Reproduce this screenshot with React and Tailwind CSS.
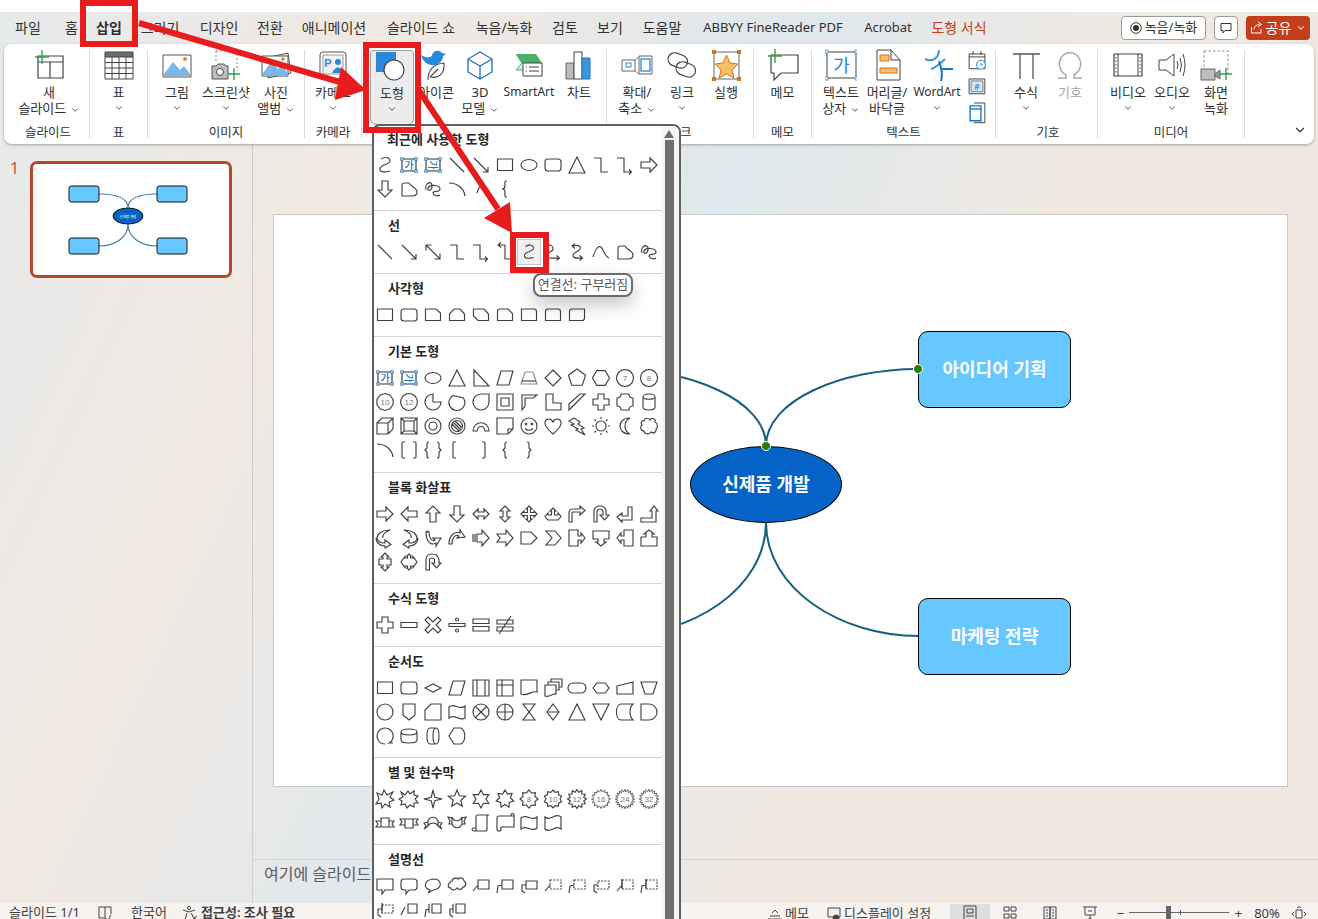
import { ChevronDown } from 'lucide-react'

const circle = (x, y, r, ry = r) => `M${x - r} ${y}a${r} ${ry} 0 1 0 ${2 * r} 0a${r} ${ry} 0 1 0 ${-2 * r} 0Z`
const ngon = (n, r, rot = -90, cx = 12, cy = 12) => {
	const pts = []
	for (let i = 0; i < n; i++) {
		const a = ((rot + (i * 360) / n) * Math.PI) / 180
		pts.push(`${(cx + r * Math.cos(a)).toFixed(2)} ${(cy + r * Math.sin(a)).toFixed(2)}`)
	}
	return `M${pts.join('L')}Z`
}
const star = (n, R, r, rot = -90) => {
	const pts = []
	for (let i = 0; i < n * 2; i++) {
		const a = ((rot + (i * 180) / n) * Math.PI) / 180
		const d = i % 2 ? r : R
		pts.push(`${(12 + d * Math.cos(a)).toFixed(2)} ${(12 + d * Math.sin(a)).toFixed(2)}`)
	}
	return `M${pts.join('L')}Z`
}

const SH = {
	line: 'M5 5L19 19',
	arrow: 'M5 5L19 19M19 14V19H14',
	dbl: 'M5 5L19 19M19 13.5V19H13.5M5 10.5V5H10.5',
	elbow: 'M5 5H12V19H19',
	elbowA: 'M4 5H11V19H18M16 16.5L18.5 19L16 21.5',
	elbowD: 'M6 5H12V19H19M8 2.5L5 5L8 7.5',
	curve: 'M8 6C13 3 17 5 17 8C17 12 7 11 7 16C7 20 13 19 17 18',
	curveA: 'M6 6C10 4 12 6 12 9C12 13 5 11 6 16C6 19 12 18 18 18M15.5 15.5L18.5 18L15.5 20.5',
	curveD: 'M8 6C14 4 16 7 15 9C13 13 7 12 8 16C9 19 12 18 17 18M10 3.5L7 6L10 8.5M14.5 15.5L17.5 18L14.5 20.5',
	curl: 'M4 17C6 9 10 5 12 7C14 9 16 17 20 18',
	free: 'M5 19V8Q5 6 8 6H12C14 10 20 11 20 15Q20 19 15 19Z',
	scrib: 'M5 13C3 5 12 3 11 10C10 15 6 14 7 11C9 7 19 8 19 12C19 16 12 13 12 16C12 18 16 20 19 18',
	arc: 'M4 6C12 6 19 11 20 19',
	arcS: 'M8 16C9 12 11 9 13 8',
	brace: 'M14 4C11 4 12 6 12 9C12 11 11 12 9 12C11 12 12 13 12 15C12 18 11 20 14 20',
	rect: 'M4.5 6H19.5V17.5H4.5Z',
	oval: circle(12, 12, 8, 5.5),
	rr: 'M7 6H17Q20 6 20 9V15Q20 18 17 18H7Q4 18 4 15V9Q4 6 7 6Z',
	tri: 'M12 4L20 20H4Z',
	rArrow: 'M4 9H13V5L20 12L13 19V15H4Z',
	dArrow: 'M9 4V13H5L12 20L19 13H15V4Z',
	uArrow: 'M9 20V11H5L12 4L19 11H15V20Z',
	lArrow: 'M20 9H11V5L4 12L11 19V15H20Z',
	lr: 'M4 12L9 7V10H15V7L20 12L15 17V14H9V17Z',
	ud: 'M12 4L17 9H14V15H17L12 20L7 15H10V9H7Z',
	quad: 'M12 4L15 7H13.5V10.5H17V9L20 12L17 15V13.5H13.5V17H15L12 20L9 17H10.5V13.5H7V15L4 12L7 9V10.5H10.5V7H9Z',
	lru: 'M12 6L15 9H13.5V13H17V11L20 14.5L17 18H7L4 14.5L7 11V13H10.5V9H9Z',
	bent: 'M4 20V11Q4 7 8 7H15V4L20 8.5L15 13V10H8Q7 10 7 11V20Z',
	uturn: 'M5 20V10Q5 4 11 4T17 10V13H20L15.5 18L11 13H14V10Q14 7 11 7T8 10V20Z',
	leftUp: 'M4 15L9 11V14H15V5H19V18H9V20Z',
	bentUp: 'M4 16H15V9H13L17 4L21 9H19V20H4Z',
	cR: 'M17 4C9 4 4 8 4 12C4 15 7 17 12 17V14L18 18.5L12 22V20C6 20 3 16 3 12M17 4C12 6 9 9 10 12',
	cL: 'M7 4C15 4 20 8 20 12C20 15 17 17 12 17V14L6 18.5L12 22V20C18 20 21 16 21 12M7 4C12 6 15 9 14 12',
	cU: 'M5 6C5 16 10 20 15 17V20L20 12L12 12L14 14C11 16 8 12 8 6ZM8 6C8 5 5 5 5 6',
	cD: 'M4 18C4 10 9 5 15 7V4L20 11L12 12L14 10C10 8 7 12 7 18Z',
	striped: 'M4 8V16M6 8V16M8 8H13V4L20 12L13 20V16H8Z',
	notched: 'M4 8H13V4L20 12L13 20V16H4L7 12Z',
	home: 'M4 6H14L20 12L14 18H4Z',
	chev: 'M5 5H14L20 12L14 19H5L11 12Z',
	rCall: 'M4 4H13V10H16V7L20 12L16 17V14H13V20H4Z',
	dCall: 'M4 5H20V13H15V16H17L12 20L7 16H9V13H4Z',
	lCall: 'M20 4H11V10H8V7L4 12L8 17V14H11V20H20Z',
	uCall: 'M4 20H20V11H15V8H17L12 4L7 8H9V11H4Z',
	udCall: 'M12 3L16 7H14V9H18V15H14V17H16L12 21L8 17H10V15H6V9H10V7H8Z',
	quadCall: 'M12 4L14 6H13.5V8H16V6.5L20 12L16 17.5V16H13.5V18H14L12 20L10 18H10.5V16H8V17.5L4 12L8 6.5V8H10.5V6H10Z',
	circ: 'M5 20V10Q5 4 11 4T18 10V13H20L15.5 18L11 13H13.5V10Q13.5 8 11 8T8.5 10V20Z',
	rtri: 'M5 4L20 20H5Z',
	para: 'M8 5H20L16 19H4Z',
	trap: { d: 'M8 6H16L20 18H4Z', dash: 'M5 15H19', gray: true },
	dia: 'M12 4L20 12L12 20L4 12Z',
	pent: ngon(5, 9),
	hex: ngon(6, 8.5, 0),
	hept: { d: ngon(14, 8.5), t: '7' },
	oct: { d: ngon(16, 8.5), t: '8' },
	dec: { d: ngon(10, 8.5), t: '10' },
	dodec: { d: ngon(12, 8.5, -75), t: '12' },
	pie: 'M12 12V4A8 8 0 1 0 20 12Z',
	chord: 'M8 5.5L18.5 8A8 8 0 1 1 8 5.5Z',
	tear: 'M20 4V12A8 8 0 1 1 12 4Z',
	frame: 'M4 4H20V20H4ZM8 8V16H16V8Z',
	half: 'M5 5H20L16 8H8V16L5 20Z',
	lshape: 'M5 4H12V13H20V20H5Z',
	diag: 'M4 14L15 4H20L4 20Z',
	plus: 'M9 4H15V9H20V15H15V20H9V15H4V9H9Z',
	plaque: 'M8 4H16Q16 8 20 8V16Q16 16 16 20H8Q8 16 4 16V8Q8 8 8 4Z',
	can: 'M6 7C6 3 18 3 18 7V17C18 21 6 21 6 17ZM6 7C6 10 18 10 18 7',
	cube: 'M4 9L9 4H20V15L15 20H4ZM4 9H15V20M15 9L20 4',
	bevel: 'M4 4H20V20H4ZM7 7H17V17H7ZM4 4L7 7M20 4L17 7M20 20L17 17M4 20L7 17',
	donut: circle(12, 12, 8) + circle(12, 12, 4),
	no: circle(12, 12, 8) + circle(12, 12, 5.5) + 'M8 8L16 16M9.5 6.5L17.5 14.5M6.5 9.5L14.5 17.5',
	blockArc: 'M4 17C4 6 20 6 20 17H16C15 11 9 11 8 17Z',
	fold: 'M4 4H20V15L15 20H4ZM20 15H15V20',
	smile: circle(12, 12, 8) + circle(9, 10, 0.8) + circle(15, 10, 0.8) + 'M8 14.5Q12 18 16 14.5',
	heart: 'M12 20C5 14 3 11 4 8C5 4 10 4 12 8C14 4 19 4 20 8C21 11 19 14 12 20Z',
	bolt: 'M9 4L15 8L13 10L19 14L16 15L20 21L11 16L13 15L6 11L9 10L4 7Z',
	sun: circle(12, 12, 5) + 'M12 3V5M12 19V21M3 12H5M19 12H21M5.5 5.5L7 7M17 17L18.5 18.5M18.5 5.5L17 7M7 17L5.5 18.5',
	moon: 'M17 4C10 4 7 8 7 12S10 20 17 20C13 18 12 15 12 12S13 6 17 4Z',
	cloud: 'M7 7C8 3 12 4 13 6C15 3 19 5 18 8C21 9 21 14 19 15C20 18 16 20 14 18C12 21 7 20 7 17C3 17 3 12 5 11C3 9 5 6 7 7Z',
	brk2: 'M8 4H6Q5 4 5 5V19Q5 20 6 20H8M16 4H18Q19 4 19 5V19Q19 20 18 20H16',
	brc2: 'M8 4Q6 4 6 6V10L4 12L6 14V18Q6 20 8 20M16 4Q18 4 18 6V10L20 12L18 14V18Q18 20 16 20',
	lbr: 'M11 4H9Q8 4 8 5V19Q8 20 9 20H11',
	rbr: 'M13 4H15Q16 4 16 5V19Q16 20 15 20H13',
	lbc: 'M14 4Q12 4 12 6V10L10 12L12 14V18Q12 20 14 20',
	rbc: 'M10 4Q12 4 12 6V10L14 12L12 14V18Q12 20 10 20',
	snip1: 'M4.5 6H15L19.5 10V17.5H4.5Z',
	snip2: 'M9 6H15L19.5 11V17.5H4.5V11Z',
	snipD: 'M4.5 6H15L19.5 11V17.5H9L4.5 13Z',
	rsnip: 'M7 6H15L19.5 10.5V17.5H4.5V8.5Q4.5 6 7 6Z',
	r1: 'M4.5 6H17Q19.5 6 19.5 8.5V17.5H4.5Z',
	r2: 'M7 6H17Q19.5 6 19.5 8.5V17.5H4.5V8.5Q4.5 6 7 6Z',
	rD: 'M7 6H19.5V15Q19.5 17.5 17 17.5H4.5V8.5Q4.5 6 7 6Z',
	mathPlus: 'M9 4H15V9H20V15H15V20H9V15H4V9H9Z',
	mathMinus: 'M4 9.5H20V14.5H4Z',
	mathMul: 'M7 4L12 9L17 4L20 7L15 12L20 17L17 20L12 15L7 20L4 17L9 12L4 7Z',
	mathDiv: 'M4 10.5H20V13.5H4Z' + circle(12, 6.5, 1.5) + circle(12, 17.5, 1.5),
	mathEq: 'M4 6H20V10.5H4ZM4 13.5H20V18H4Z',
	mathNe: 'M4 7H20V11H4ZM4 14H20V18H4ZM6 21L18 3',
	fDec: 'M12 8L20 12L12 16L4 12Z',
	fPre: 'M4 4H20V20H4ZM8 4V20M16 4V20',
	fInt: 'M4 4H20V20H4ZM9 4V20M4 9H20',
	fDoc: 'M4 4H20V16C15 14 10 21 4 18Z',
	fMulti: 'M4 9H15V18C12 17 8 22 4 20ZM7 9V6H18V14H15M10 6V3H21V11H18',
	fTerm: 'M8 7H16A5 5 0 0 1 16 17H8A5 5 0 0 1 8 7Z',
	fPrep: 'M8 7H16L20 12L16 17H8L4 12Z',
	fMan: 'M4 10L20 6V18H4Z',
	fOp: 'M4 6H20L16 18H8Z',
	fOff: 'M6 4H18V15L12 20L6 15Z',
	fCard: 'M10 4H20V20H4V10Z',
	fTape: 'M4 7C9 2 14 11 20 6V18C15 22 9 13 4 18Z',
	fSum: circle(12, 12, 8) + 'M6.5 6.5L17.5 17.5M17.5 6.5L6.5 17.5',
	fOr: circle(12, 12, 8) + 'M12 4V20M4 12H20',
	fCol: 'M6 4H18L6 20H18Z',
	fSort: 'M12 4L18 12L12 20L6 12ZM6 12H18',
	fTriD: 'M12 20L20 4H4Z',
	fStored: 'M8 4H20C16 8 16 16 20 20H8C2 20 2 4 8 4Z',
	fDelay: 'M4 4H12A8 8 0 0 1 12 20H4Z',
	fSeq: 'M12 20A8 8 0 1 1 16 19H20',
	fDisk: 'M4 8C4 4 20 4 20 8V16C20 20 4 20 4 16ZM4 8C4 12 20 12 20 8',
	fDir: 'M9 4H15C19 4 19 20 15 20H9C5 20 5 4 9 4ZM15 4C11 4 11 20 15 20',
	fDisp: 'M9 4H16C21 7 21 17 16 20H9L4 12Z',
	exp1: 'M4 6L9 8L11 3L14 8L20 5L17 10L21 13L16 15L17 20L12 17L9 21L8 16L3 17L6 12Z',
	exp2: 'M4 5L8 8L11 4L13 7L17 4L17 8L21 9L18 12L21 16L17 16L17 20L13 18L10 21L8 17L4 18L5 14L2 12L6 10Z',
	s4: star(4, 9, 2.5),
	s5: star(5, 9, 4),
	s6: star(6, 9, 5),
	s7: star(7, 9, 5.5),
	s8: { d: star(8, 9, 6.5), t: '8' },
	s10: { d: star(10, 9, 7), t: '10' },
	s12: { d: star(12, 9.5, 7), t: '12' },
	s16: { d: star(16, 9.5, 7.2), t: '16', thin: true },
	s24: { d: star(20, 9.8, 7.2), t: '24', thin: true },
	s32: { d: star(20, 9.8, 7.4), t: '32', thin: true },
	rbUp: 'M8 7H16V16H8ZM8 10H3L5 13L3 16H8M16 10H21L19 13L21 16H16',
	rbDn: 'M8 8H16V17H8ZM8 8H3L5 11L3 14H8M16 8H21L19 11L21 14H16',
	rbCU: 'M7 10C9 5 15 5 17 10V15C15 11 9 11 7 15ZM7 11L3 12L5 15L3 18L7 15M17 11L21 12L19 15L21 18L17 15',
	rbCD: 'M7 6C9 11 15 11 17 6V13C15 18 9 18 7 13ZM7 7L3 6L5 10L4 13L7 13M17 7L21 6L19 10L20 13L17 13',
	scrV: 'M7 6Q7 4 9 4H20Q18 4 18 6V18Q18 20 16 20H5Q3 20 3 18.5T5 17H7ZM5 20H7V17',
	scrH: 'M4 7Q4 5 6 5H18V4Q18 2.5 19.5 2.5T21 4V16H8V18Q8 20 6 20T4 18ZM18 5H21',
	wave: 'M4 7C9 2 15 11 20 6V17C15 22 9 13 4 18Z',
	wave2: 'M4 6C6 8 8 8 12 6S18 4 20 6V18C18 16 16 16 12 18S6 20 4 18Z',
	cbRect: 'M4 5H20V16H12L9 20V16H4Z',
	cbR: 'M7 5H17Q20 5 20 8V13Q20 16 17 16H12L9 20V16H7Q4 16 4 13V8Q4 5 7 5Z',
	cbOval: 'M9 16C2 14 3 6 12 5C21 5 22 14 13 16C11 16 9 18 7 19C8 18 9 17 9 16Z',
	cbCloud: 'M7 7C8 3 12 4 13 5C15 3 19 4 19 7C22 8 21 13 18 13C17 16 13 16 12 14C10 17 6 16 6 14C2 14 3 9 5 9C5 8 6 7 7 7ZM6 18.5H6.5M4 21H4.5',
	l1: 'M9 6H20V15H9ZM9 11L4 17',
	l2: 'M9 6H20V15H9ZM9 11L5 12L4 19',
	l3: 'M9 7H20V15H9ZM9 11H5V17L8 19',
	d1: { d: 'M9 11L4 17', dash: 'M9 6H20V15H9Z' },
	d2: { d: 'M9 11L5 12L4 19', dash: 'M9 6H20V15H9Z' },
	d3: { d: 'M9 11H5V17L8 19', dash: 'M9 7H20V15H9Z' },
	a1: { d: 'M9 5V15M9 11L4 17', dash: 'M9 6H20V15H9Z' },
	a2: { d: 'M9 5V15M9 11L5 12L4 19', dash: 'M9 6H20V15H9Z' },
	a3: { d: 'M9 5V15M9 11H5V17L8 19', dash: 'M9 7H20V15H9Z' },
	n1: 'M11 6H20V15H11ZM11 6V15M8 9L4 17',
	n2: 'M11 6H20V15H11ZM8 6V15M8 11L5 12L4 19',
	n3: 'M11 6H20V15H11ZM8 6V15M8 11H5V17L8 19',
}
SH.oval2 = circle(12, 12, 8)

const SECTIONS = [
	['최근에 사용한 도형', ['curve', 'tb', 'vtb', 'line', 'arrow', 'rect', 'oval', 'rr', 'tri', 'elbow', 'elbowA', 'rArrow', 'dArrow', 'free', 'scrib', 'arc', 'arcS', 'brace']],
	['선', ['line', 'arrow', 'dbl', 'elbow', 'elbowA', 'elbowD', 'curve', 'curveA', 'curveD', 'curl', 'free', 'scrib']],
	['사각형', ['rect', 'rr', 'snip1', 'snip2', 'snipD', 'rsnip', 'r1', 'r2', 'rD']],
	['기본 도형', ['tb', 'vtb', 'oval', 'tri', 'rtri', 'para', 'trap', 'dia', 'pent', 'hex', 'hept', 'oct', 'dec', 'dodec', 'pie', 'chord', 'tear', 'frame', 'half', 'lshape', 'diag', 'plus', 'plaque', 'can', 'cube', 'bevel', 'donut', 'no', 'blockArc', 'fold', 'smile', 'heart', 'bolt', 'sun', 'moon', 'cloud', 'arc', 'brk2', 'brc2', 'lbr', 'rbr', 'lbc', 'rbc']],
	['블록 화살표', ['rArrow', 'lArrow', 'uArrow', 'dArrow', 'lr', 'ud', 'quad', 'lru', 'bent', 'uturn', 'leftUp', 'bentUp', 'cR', 'cL', 'cU', 'cD', 'striped', 'notched', 'home', 'chev', 'rCall', 'dCall', 'lCall', 'uCall', 'udCall', 'quadCall', 'circ']],
	['수식 도형', ['mathPlus', 'mathMinus', 'mathMul', 'mathDiv', 'mathEq', 'mathNe']],
	['순서도', ['rect', 'rr', 'fDec', 'para', 'fPre', 'fInt', 'fDoc', 'fMulti', 'fTerm', 'fPrep', 'fMan', 'fOp', 'oval2', 'fOff', 'fCard', 'fTape', 'fSum', 'fOr', 'fCol', 'fSort', 'tri', 'fTriD', 'fStored', 'fDelay', 'fSeq', 'fDisk', 'fDir', 'fDisp']],
	['별 및 현수막', ['exp1', 'exp2', 's4', 's5', 's6', 's7', 's8', 's10', 's12', 's16', 's24', 's32', 'rbUp', 'rbDn', 'rbCU', 'rbCD', 'scrV', 'scrH', 'wave', 'wave2']],
	['설명선', ['cbRect', 'cbR', 'cbOval', 'cbCloud', 'l1', 'l2', 'l3', 'd1', 'd2', 'd3', 'a1', 'a2', 'a3', 'n1', 'n2', 'n3']],
]

function TextBoxShape({ vertical }) {
	const handles = [[5, 6], [19, 6], [5, 18], [19, 18]]
	return (
		<svg width="24" height="24" viewBox="0 0 24 24" className="block">
			<path d="M5 6H19V18H5Z" fill="none" stroke="#303030" strokeWidth="1.1" />
			{handles.map(([x, y]) => (
				<rect key={`${x}-${y}`} x={x - 1.2} y={y - 1.2} width="2.4" height="2.4" fill="#fff" stroke="#1b74c0" strokeWidth=".9" />
			))}
			<text
				x="12"
				y="15.6"
				textAnchor="middle"
				fontSize="10"
				fontWeight="500"
				fill="#1b74c0"
				fontFamily="Noto Sans CJK KR"
				transform={vertical ? 'rotate(90 12 12)' : undefined}
			>
				가
			</text>
		</svg>
	)
}

function Shape({ name, hover }) {
	let inner
	if (name === 'tb' || name === 'vtb') {
		inner = <TextBoxShape vertical={name === 'vtb'} />
	} else {
		const raw = SH[name]
		const s = typeof raw === 'string' ? { d: raw } : raw
		inner = (
			<svg width="24" height="24" viewBox="0 0 24 24" className="block">
				<path d={s.d} fill="none" stroke={s.gray ? '#8a8a8a' : '#404040'} strokeWidth={s.thin ? 0.8 : 1.15} />
				{s.dash ? <path d={s.dash} fill="none" stroke="#404040" strokeWidth="1.15" strokeDasharray={s.gray ? undefined : '2 1.2'} /> : null}
				{s.t ? (
					<text x="12" y="15" textAnchor="middle" fontSize="8" fill="#777" fontFamily="Liberation Sans">
						{s.t}
					</text>
				) : null}
			</svg>
		)
	}
	return (
		<div className={hover ? 'h-[26px] w-6 -my-px flex items-center justify-center border border-[#c6c6c6] bg-[#f0f0f0]' : 'h-6 w-6'}>
			{inner}
		</div>
	)
}

function ShapeMenu() {
	return (
		<div className="absolute left-[372px] top-[124px] z-10 flex h-[800px] w-[309px] overflow-hidden rounded-t-[8px] border-2 border-[#606060] bg-white">
			<div className="w-[288px] shrink-0">
				{SECTIONS.map(([title, shapes], idx) => (
					<div key={title} className={idx === 0 ? 'h-[84px]' : idx === 3 ? 'border-t border-[#d2d2d2] pb-[10px]' : 'border-t border-[#d2d2d2] pb-[9px]'}>
						<div className={idx === 0 ? 'flex h-[27px] items-center pl-[13px] text-[13px] font-semibold text-[#262626]' : 'flex h-[29px] items-center pl-[14px] text-[13px] font-semibold text-[#262626]'}>
							{title}
						</div>
						<div className="-ml-px grid grid-cols-[repeat(12,24px)]">
							{shapes.map((name, i) => (
								<Shape key={`${name}-${i}`} name={name} hover={idx === 1 && i === 6} />
							))}
						</div>
					</div>
				))}
			</div>
			<div className="flex flex-1 flex-col items-center bg-[#f5f5f5] pr-[3px]">
				<svg width="10" height="8" viewBox="0 0 10 8" className="mt-[4px]">
					<path d="M5 0L10 8H0Z" fill="#6e6e6e" />
				</svg>
				<div className="mt-[2px] w-[9px] flex-1 bg-[#6f6f6f]" />
			</div>
		</div>
	)
}

const Chev = ({ className = '' }) => <ChevronDown size={10} strokeWidth={2} className={`inline-block text-[#333] ${className}`} />

const ic = { width: 32, height: 32, viewBox: '0 0 32 32', fill: 'none', className: 'block' }
const D = '#444'
const B = '#2b88d8'

const IconNew = () => (
	<svg {...ic}>
		<path d="M5 7H30V29H5ZM5 13H30M17 13V29" stroke={D} strokeWidth="1.2" fill="#fff" />
		<path d="M9 1V15M2 8H16" stroke="#2ea043" strokeWidth="1.4" />
	</svg>
)
const IconTable = () => (
	<svg {...ic}>
		<path d="M2 3H30V8H2Z" fill="#6e6e6e" />
		<path d="M2 3H30V30H2ZM2 8H30M2 13.5H30M2 19H30M2 24.5H30M9 8V30M16 8V30M23 8V30" stroke={D} strokeWidth="1" />
	</svg>
)
const IconPicture = () => (
	<svg {...ic}>
		<path d="M2 6H30V28H2Z" fill="#fff" stroke="#555" />
		<path d="M3 25L12 13L19 21L23 17L29 25V27H3Z" fill="#79b8ea" />
		<circle cx="24" cy="10" r="2" fill="#e8842c" />
	</svg>
)
const IconScreenshot = () => (
	<svg {...ic}>
		<path d="M6 2H27V22" stroke="#888" strokeDasharray="2 2" />
		<path d="M6 2V14" stroke="#888" strokeDasharray="2 2" />
		<path d="M2 17H6L8 15H14L16 17H18V30H2Z" fill="#bdbdbd" stroke="#555" />
		<circle cx="10" cy="23" r="3.5" fill="#fff" stroke="#444" />
		<path d="M24 19V31M18 25H30" stroke="#2ea043" strokeWidth="1.4" />
	</svg>
)
const IconAlbum = () => (
	<svg {...ic}>
		<path d="M5 9L28 4L31 24L8 29Z" fill="#e8e8e8" stroke="#555" />
		<path d="M2 7H28V27H2Z" fill="#fff" stroke="#555" />
		<path d="M3 24L11 13L18 20L22 16L27 23V26H3Z" fill="#79b8ea" />
		<circle cx="23" cy="10" r="1.8" fill="#e8842c" />
	</svg>
)
const IconCameo = () => (
	<svg {...ic}>
		<rect x="3" y="3" width="26" height="27" rx="3" stroke="#555" fill="#fff" />
		<rect x="6" y="6" width="20" height="19" fill="#f2f2f2" stroke="#999" />
		<text x="11" y="18" fontSize="11" fill={B} textAnchor="middle" fontWeight="700" fontFamily="Liberation Sans">P</text>
		<circle cx="21" cy="13" r="3" fill={B} />
		<path d="M15 24Q21 13 27 24Z" fill={B} />
	</svg>
)
const IconShapes = () => (
	<svg {...ic}>
		<path d="M0 2H20V22H0Z" fill="#2b88d8" />
		<circle cx="18" cy="20" r="10" fill="#fff" stroke="#444" strokeWidth="1.2" />
	</svg>
)
const IconIcons = () => (
	<svg {...ic}>
		<path d="M1 6C6 9 9 9 12 7C12 2 19 0 22 4L26 5L23 7C23 13 17 17 11 16C6 15 2 11 1 6Z" fill="#2b88d8" />
		<path d="M8 31C8 20 14 15 24 14C25 23 20 30 10 28M10 28L18 20" stroke="#444" fill="#fff" strokeWidth="1.1" />
	</svg>
)
const Icon3D = () => (
	<svg {...ic}>
		<path d="M16 3L28 10V23L16 30L4 23V10ZM4 10L16 17L28 10M16 17V30" stroke="#1b74c0" strokeWidth="1.3" fill="#fff" />
	</svg>
)
const IconSmartArt = () => (
	<svg {...ic}>
		<path d="M3 5H23L29 14H9Z" fill="#4caf6a" />
		<path d="M3 5L9 14L3 21H12" stroke="#4caf6a" fill="#d6efdc" />
		<path d="M10 14H29V27H10Z" fill="#fff" stroke="#444" />
		<path d="M13 18H14M13 22H14M16 18H26M16 22H26" stroke="#444" />
	</svg>
)
const IconChart = () => (
	<svg {...ic}>
		<path d="M3 14H11V30H3Z" fill="#bdbdbd" stroke="#666" />
		<path d="M11 3H19V30H11Z" fill="#fff" stroke="#444" />
		<path d="M19 9H27V30H19Z" fill="#3d94e0" stroke="#1b74c0" />
	</svg>
)
const IconZoom = () => (
	<svg {...ic}>
		<path d="M1 11H14V22H1Z" fill="#fff" stroke="#666" />
		<rect x="5" y="14" width="5" height="4" stroke={B} />
		<path d="M14 11L18 8M14 22L18 25" stroke="#888" />
		<path d="M18 7H31V25H18Z" fill="#fff" stroke="#666" />
		<rect x="20" y="10" width="9" height="12" stroke={B} strokeWidth="1.3" />
	</svg>
)
const IconLink = () => (
	<svg {...ic}>
		<rect x="2" y="5" width="20" height="13" rx="6.5" transform="rotate(20 12 11)" stroke={D} strokeWidth="1.2" />
		<rect x="10" y="14" width="20" height="13" rx="6.5" transform="rotate(20 20 20)" stroke={D} strokeWidth="1.2" />
	</svg>
)
const IconAction = () => (
	<svg {...ic}>
		<path d="M4 3H29V30H4Z" stroke="#666" />
		<path d="M2 1H6V5H2ZM27 1H31V5H27ZM2 28H6V32H2ZM27 28H31V32H27Z" fill="#d9730d" />
		<path d="M16.5 6L20 14L28 15L22 21L24 29L16.5 25L9 29L11 21L5 15L13 14Z" fill="#f7c067" stroke="#d9730d" />
	</svg>
)
const IconMemo = () => (
	<svg {...ic}>
		<path d="M4 6H31V24H14L7 31V24H4Z" fill="#fff" stroke={D} strokeWidth="1.2" />
		<path d="M8 0V14M1 7H15" stroke="#2ea043" strokeWidth="1.4" />
	</svg>
)
const IconTextBox = () => (
	<svg {...ic}>
		<path d="M2 3H31V29H2Z" stroke={D} />
		<path d="M0 1H3V4H0ZM30 1H33V4H30ZM0 28H3V31H0ZM30 28H33V31H30Z" fill="#fff" stroke={B} strokeWidth=".8" />
		<text x="16.5" y="23" textAnchor="middle" fontSize="18" fill={B} fontFamily="Noto Sans CJK KR">가</text>
	</svg>
)
const IconHeader = () => (
	<svg {...ic}>
		<path d="M6 1H20L29 11V31H6Z" fill="#fff" stroke={D} />
		<path d="M20 1V11H29" stroke={D} />
		<path d="M9 6H18V12H9ZM9 19H26V24H9Z" fill="#f7c067" stroke="#d9730d" />
	</svg>
)
const IconWordArt = () => (
	<svg {...ic}>
		<path d="M4 10C12 14 18 8 18 1M10 20C16 18 22 12 24 10" stroke="#3d94e0" strokeWidth="2" />
		<path d="M18 12C20 18 22 24 20 32M20 20H32" stroke="#1b74c0" strokeWidth="2" />
	</svg>
)
const IconEq = () => (
	<svg {...ic}>
		<path d="M3 5H30M10 5V30M23 5V30" stroke="#555" strokeWidth="1.3" />
	</svg>
)
const IconSymbol = () => (
	<svg {...ic}>
		<path d="M4 29H12V26C5 22 4 14 7 9C11 2 21 2 25 9C28 14 27 22 20 26V29H28" stroke="#aaa" strokeWidth="1.5" />
	</svg>
)
const IconVideo = () => (
	<svg {...ic}>
		<path d="M2 5H30V27H2Z" fill="#fff" stroke={D} strokeWidth="1.2" />
		<path d="M6 5V27M26 5V27" stroke={D} />
		<path d="M4 8V25M28 8V25" stroke={D} strokeDasharray="1.5 2" />
	</svg>
)
const IconAudio = () => (
	<svg {...ic}>
		<path d="M3 11H10L18 5V27L10 21H3Z" fill="#fff" stroke={D} />
		<path d="M21 12Q23 16 21 20M24 9Q27 16 24 23M27 5Q31 16 27 27" stroke={D} />
	</svg>
)
const IconRecord = () => (
	<svg {...ic}>
		<path d="M4 2H28V24" stroke="#888" strokeDasharray="2.5 2" />
		<path d="M4 2V18" stroke="#888" strokeDasharray="2.5 2" />
		<path d="M1 20H15V31H1Z" fill="#bdbdbd" stroke="#666" />
		<path d="M15 25L20 21V30L15 27Z" fill="#999" stroke="#666" />
		<path d="M26 19V31M20 25H32" stroke="#2ea043" strokeWidth="1.4" />
	</svg>
)
const SmallObjects = () => (
	<div className="flex flex-col gap-[4px]">
		<svg width="20" height="22" viewBox="0 0 20 22" fill="none" className="block">
			<path d="M2 4H18V19H2ZM2 7H18M6 1V5M14 1V5" stroke={D} />
			<circle cx="14" cy="15" r="4.5" fill="#fff" stroke={B} />
			<path d="M14 13V15H16" stroke={B} />
		</svg>
		<svg width="20" height="22" viewBox="0 0 20 22" fill="none" className="block">
			<path d="M2 3H18V18H2Z" stroke={D} />
			<path d="M4 5H16V16H4Z" fill="#d6e6f5" stroke="#777" />
			<text x="10" y="14" textAnchor="middle" fontSize="9" fontWeight="700" fill="#1b74c0" fontFamily="Liberation Sans">#</text>
		</svg>
		<svg width="20" height="24" viewBox="0 0 20 24" fill="none" className="block">
			<path d="M7 2H18V22H7" stroke={D} />
			<path d="M3 5H14V20H3Z" fill="#fff" stroke="#1b74c0" strokeWidth="1.4" />
			<path d="M3 8H14" stroke="#1b74c0" strokeWidth="1.4" />
		</svg>
	</div>
)

function Item({ w, icon, l1, l2, chev, gray, selected, latin }) {
	return (
		<div className={`flex flex-col items-center ${w} ${selected ? 'rounded-b-[6px] rounded-t-[3px] border border-[#9c9c9c] bg-[#ececec]' : ''} ${gray ? 'text-[#a6a6a6]' : 'text-[#303030]'}`}>
			<div className="-mt-px flex h-[35px] items-start justify-center">{icon}</div>
			{l1 ? <div className={`h-4 whitespace-nowrap leading-4 ${latin ? 'text-[12px]' : 'text-[13px]'}`}>{l1}</div> : null}
			{l2 ? (
				<div className="h-4 whitespace-nowrap text-[13px] leading-4">
					{l2} {chev === 'inline' ? <Chev /> : null}
				</div>
			) : null}
			{chev === 'below' ? (
				<div className="flex h-4 items-center">
					<Chev />
				</div>
			) : null}
		</div>
	)
}

function Group({ w, label, pad = '', labelPad = '', last, children }) {
	return (
		<div className={`flex h-[88px] shrink-0 flex-col ${w} ${last ? '' : 'border-r border-[#dcdcdc]'}`}>
			<div className={`flex h-[75px] shrink-0 ${pad}`}>{children}</div>
			<div className={`h-[15px] shrink-0 text-center text-[12.5px] leading-[15px] text-[#303030] ${labelPad}`}>{label}</div>
		</div>
	)
}

function Ribbon() {
	return (
		<div className="relative mx-[4px] flex h-[100px] shrink-0 rounded-[8px] bg-white py-[6px] shadow-[0_1px_3px_rgba(0,0,0,0.3)]">
			<Group w="w-[86px]" label="슬라이드" pad="pl-[10px]" labelPad="pl-[3px]">
				<Item w="w-[70px]" icon={<IconNew />} l1="새" l2="슬라이드" chev="inline" />
			</Group>
			<Group w="w-[58px]" label="표" pad="justify-center">
				<Item w="w-[50px]" icon={<IconTable />} l1="표" chev="below" />
			</Group>
			<Group w="w-[157px]" label="이미지" pad="pl-[5px]">
				<Item w="w-[48px]" icon={<IconPicture />} l1="그림" chev="below" />
				<Item w="w-[50px]" icon={<IconScreenshot />} l1="스크린샷" chev="below" />
				<Item w="w-[50px]" icon={<IconAlbum />} l1="사진" l2="앨범" chev="inline" />
			</Group>
			<Group w="w-[57px]" label="카메라" pad="justify-center">
				<Item w="w-[50px]" icon={<IconCameo />} l1="카메오" chev="below" />
			</Group>
			<Group w="w-[245px]" label="" pad="pl-[8px]">
				<Item w="w-[44px]" selected icon={<IconShapes />} l1="도형" chev="below" />
				<Item w="w-[44px]" icon={<IconIcons />} l1="아이콘" />
				<Item w="w-[44px]" icon={<Icon3D />} l1="3D" l2="모델" chev="inline" />
				<Item w="w-[54px]" latin icon={<IconSmartArt />} l1="SmartArt" />
				<Item w="w-[46px]" icon={<IconChart />} l1="차트" />
			</Group>
			<Group w="w-[147px]" label="링크" pad="pl-[6px]">
				<Item w="w-[48px]" icon={<IconZoom />} l1="확대/" l2="축소" chev="inline" />
				<Item w="w-[42px]" icon={<IconLink />} l1="링크" chev="below" />
				<Item w="w-[46px]" icon={<IconAction />} l1="실행" />
			</Group>
			<Group w="w-[58px]" label="메모" pad="justify-center">
				<Item w="w-[50px]" icon={<IconMemo />} l1="메모" />
			</Group>
			<Group w="w-[184px]" label="텍스트" pad="pl-[5px]">
				<Item w="w-[48px]" icon={<IconTextBox />} l1="텍스트" l2="상자" chev="inline" />
				<Item w="w-[44px]" icon={<IconHeader />} l1="머리글/" l2="바닥글" />
				<Item w="w-[56px]" latin icon={<IconWordArt />} l1="WordArt" chev="below" />
				<div className="flex w-[24px] justify-center">
					<SmallObjects />
				</div>
			</Group>
			<Group w="w-[102px]" label="기호" pad="pl-[8px]" labelPad="pl-[3px]">
				<Item w="w-[44px]" icon={<IconEq />} l1="수식" chev="below" />
				<Item w="w-[44px]" gray icon={<IconSymbol />} l1="기호" />
			</Group>
			<Group w="w-[147px]" label="미디어" pad="pl-[8px]">
				<Item w="w-[44px]" icon={<IconVideo />} l1="비디오" chev="below" />
				<Item w="w-[44px]" icon={<IconAudio />} l1="오디오" chev="below" />
				<Item w="w-[44px]" icon={<IconRecord />} l1="화면" l2="녹화" />
			</Group>
			<ChevronDown size={14} strokeWidth={2} className="absolute bottom-[7px] right-[7px] text-[#333]" />
		</div>
	)
}

const TABS = [
	['파일', 'w-[50px] pl-[15px]'],
	['홈', 'w-[34px] pl-[15px]'],
	['삽입', 'w-[50px]'],
	['그리기', 'w-[52px]'],
	['디자인', 'w-[66px]'],
	['전환', 'w-[36px]'],
	['애니메이션', 'w-[92px]'],
	['슬라이드 쇼', 'w-[82px]'],
	['녹음/녹화', 'w-[84px]'],
	['검토', 'w-[38px]'],
	['보기', 'w-[52px]'],
	['도움말', 'w-[52px]'],
	['ABBYY FineReader PDF', 'w-[170px] text-[13px]'],
	['Acrobat', 'w-[60px] text-[13px]'],
	['도형 서식', 'w-[82px]'],
]

function TabBar() {
	return (
		<div className="flex h-[32px] shrink-0 items-center pb-px text-[14px] text-[#303030]">
			{TABS.map(([name, cls], i) => (
				<div key={name} className={`whitespace-nowrap ${cls} ${i === 0 || i === 1 ? '' : 'text-center'} ${name === '삽입' ? 'relative font-bold' : ''} ${name === '도형 서식' ? 'text-[#c43e1c]' : ''}`}>
					{name}
					{name === '삽입' ? <span className="absolute bottom-[-5px] left-[13px] h-[2px] w-[25px] bg-[#b7472a]" /> : null}
				</div>
			))}
			<div className="ml-auto mr-[8px] flex items-center gap-[8px]">
				<div className="flex h-[24px] w-[85px] items-center justify-center gap-[3px] rounded-[4px] border border-[#9a9a9a] bg-white text-[13px]">
					<svg width="12" height="12" viewBox="0 0 12 12" fill="none">
						<circle cx="6" cy="6" r="5.3" stroke="#333" />
						<circle cx="6" cy="6" r="3" fill="#333" />
					</svg>
					녹음/녹화
				</div>
				<div className="flex h-[24px] w-[24px] items-center justify-center rounded-[4px] border border-[#9a9a9a] bg-white">
					<svg width="12" height="12" viewBox="0 0 12 12" fill="none">
						<path d="M1 1.5H11V8.5H5L3 11V8.5H1Z" stroke="#333" />
					</svg>
				</div>
				<div className="flex h-[24px] w-[64px] items-center justify-center gap-[3px] rounded-[4px] bg-[#c43e1c] text-[14px] text-white">
					<svg width="13" height="13" viewBox="0 0 13 13" fill="none">
						<path d="M1.5 6V12H11V8M4 8.5C4 5 7 3.5 9.5 3.5M8 1L11.5 3.5L8 6" stroke="#fff" />
					</svg>
					공유
					<ChevronDown size={10} strokeWidth={2.5} className="ml-[2px]" />
				</div>
			</div>
		</div>
	)
}

function Thumbnail() {
	const Box = ({ x, y, t }) => (
		<g>
			<rect x={x} y={y} width="30" height="16" rx="2.5" fill="#66c8ff" stroke="#111" strokeWidth="1" />
			<text x={x + 15} y={y + 9.5} textAnchor="middle" fontSize="3.4" fill="#fff" fontFamily="Noto Sans CJK KR">{t}</text>
		</g>
	)
	return (
		<svg width="196" height="111" viewBox="0 0 196 111" className="block">
			<path d="M95 44C95 34 84 30 66 30M95 44C95 34 106 30 124 30M95 60C95 72 84 82 66 82M95 60C95 72 106 82 124 82" fill="none" stroke="#3f7f9c" strokeWidth="1.1" />
			<Box x="36" y="22" t="시장 조사" />
			<Box x="124" y="22" t="아이디어 기획" />
			<Box x="36" y="74" t="디자인/설계" />
			<Box x="124" y="74" t="마케팅 전략" />
			<ellipse cx="95" cy="52" rx="15" ry="8" fill="#0563c8" stroke="#111" strokeWidth="1" />
			<text x="95" y="53.5" textAnchor="middle" fontSize="3.4" fill="#fff" fontFamily="Noto Sans CJK KR">신제품 개발</text>
		</svg>
	)
}

function Slide() {
	const nodeBox = 'absolute flex h-[77px] w-[153px] items-center justify-center rounded-[10px] border border-black bg-[#66c8ff] text-[18px] font-bold text-white'
	return (
		<div className="relative h-[573px] w-[1015px] border border-[#c9c9c9] bg-white">
			<svg width="1013" height="571" viewBox="274 215 1013 571" fill="none" className="absolute inset-0">
				<path d="M766 446C766 400 842 369 918 369M766 446C766 400 690 369 614 369M766 522C766 590 842 636 918 636M766 522C766 590 690 636 614 636" stroke="#156082" strokeWidth="2" />
			</svg>
			<div className={`${nodeBox} left-[644px] top-[116px]`}>아이디어 기획</div>
			<div className={`${nodeBox} left-[644px] top-[383px]`}>마케팅 전략</div>
			<div className="absolute left-[416px] top-[231px] flex h-[77px] w-[152px] items-center justify-center rounded-[50%] border border-black bg-[#0563c8] text-[18px] font-bold text-white">
				신제품 개발
			</div>
			<span className="absolute left-[639px] top-[149px] h-[10px] w-[10px] rounded-full border-[1.5px] border-white bg-[#2e7d00]" />
			<span className="absolute left-[487px] top-[226px] h-[10px] w-[10px] rounded-full border-[1.5px] border-white bg-[#2e7d00]" />
		</div>
	)
}

function StatusBar() {
	const icon = { fill: 'none', stroke: '#444', strokeWidth: 1 }
	return (
		<div className="flex h-[16px] shrink-0 items-start justify-between overflow-hidden bg-[#f5f2ef] pt-px text-[13px] leading-[15px] text-[#404040]">
			<div className="flex items-center pl-[9px]">
				<span className="w-[88px] whitespace-nowrap">슬라이드 1/1</span>
				<svg width="16" height="16" viewBox="0 0 16 16" className="mt-px" {...icon}>
					<path d="M2 2H8V13H2ZM8 2H14V9M8 13L11 15L14 10" />
				</svg>
				<span className="ml-[18px] w-[51px] whitespace-nowrap">한국어</span>
				<svg width="16" height="16" viewBox="0 0 16 16" className="mt-px" {...icon}>
					<circle cx="7" cy="3" r="1.6" />
					<path d="M1 5L7 7L13 5M5 8L3 15M9 8L11 11M10 11L15 15M15 11L10 15" />
				</svg>
				<span className="ml-[3px] whitespace-nowrap font-semibold">접근성: 조사 필요</span>
			</div>
			<div className="flex items-center">
				<svg width="16" height="14" viewBox="0 0 16 14" className="mt-px" {...icon}>
					<path d="M1 12H15M3 9H13M5 6L8 3L11 6" />
				</svg>
				<span className="ml-[2px] w-[41px] whitespace-nowrap">메모</span>
				<svg width="16" height="16" viewBox="0 0 16 16" className="mt-px" {...icon}>
					<path d="M2 2H14V11H2Z" />
					<circle cx="10" cy="12" r="3" fill="#444" />
				</svg>
				<span className="ml-[2px] w-[106px] whitespace-nowrap">디스플레이 설정</span>
				<div className="flex h-[18px] w-[40px] items-center justify-center bg-[#dedede]">
					<svg width="16" height="16" viewBox="0 0 16 16" {...icon}>
						<path d="M2 1H14V15H2ZM5 4H11V8H5ZM4 11H12" />
					</svg>
				</div>
				<div className="flex h-[18px] w-[40px] items-center justify-center">
					<svg width="16" height="16" viewBox="0 0 16 16" {...icon}>
						<path d="M2 2H7V6H2ZM9 2H14V6H9ZM2 9H7V13H2ZM9 9H14V13H9Z" />
					</svg>
				</div>
				<div className="flex h-[18px] w-[40px] items-center justify-center">
					<svg width="16" height="16" viewBox="0 0 16 16" {...icon}>
						<path d="M2 2H8V14H2ZM8 2H14V14H8ZM4 5H6M4 8H6M4 11H6M10 5H12M10 8H12M10 11H12" />
					</svg>
				</div>
				<div className="flex h-[18px] w-[40px] items-center justify-center">
					<svg width="16" height="16" viewBox="0 0 16 16" {...icon}>
						<path d="M1 2H15M3 2V10H13V2M8 10V13M5 15L8 13L11 15M6 6H10" />
					</svg>
				</div>
				<span className="ml-[6px] flex w-[9px] justify-center">−</span>
				<div className="relative ml-[4px] h-[18px] w-[100px]">
					<span className="absolute left-0 right-0 top-[8px] h-px bg-[#666]" />
					<span className="absolute left-[51px] top-[6px] h-[5px] w-px bg-[#666]" />
					<span className="absolute left-[37px] top-[2px] h-[14px] w-[5px] bg-[#666]" />
				</div>
				<span className="ml-px w-[17px] text-center">+</span>
				<span className="w-[40px] whitespace-nowrap text-center">80%</span>
				<svg width="16" height="16" viewBox="0 0 16 16" className="ml-[4px] mr-[11px] mt-px" {...icon}>
					<path d="M5 4H11V12H5ZM3 6L1 8L3 10M13 6L15 8L13 10M6 2L8 0.5L10 2M6 14L8 15.5L10 14" />
				</svg>
			</div>
		</div>
	)
}

function Annotations() {
	return (
		<svg width="1318" height="919" viewBox="0 0 1318 919" fill="none" className="pointer-events-none absolute left-0 top-0 z-20">
			<g stroke="#e81c1c" strokeWidth="6">
				<rect x="83" y="3" width="52" height="41" />
				<rect x="366" y="45" width="52" height="85" />
				<rect x="513" y="235" width="33" height="35" />
				<path d="M139 23L350 85" />
				<path d="M418 89L498 209" />
			</g>
			<path d="M366 90L341 67L335 100Z" fill="#e81c1c" />
			<path d="M512 233L484 218L510 202Z" fill="#e81c1c" />
		</svg>
	)
}

export default function App() {
	return (
		<div className="relative flex h-[919px] w-[1318px] flex-col overflow-hidden bg-white font-['Noto_Sans','Noto_Sans_CJK_KR',sans-serif]">
			<div className="h-[12px] shrink-0" />
			<div className="flex min-h-0 flex-1 flex-col bg-[linear-gradient(115deg,#e6eaeb_0%,#f1e9e3_24%,#dfe8ed_47%,#f0e9e2_66%,#efe8e1_100%)]">
				<TabBar />
				<Ribbon />
				<div className="flex min-h-0 flex-1">
					<div className="flex w-[253px] shrink-0 border-r border-[#cfcfcf] pl-[10px] pt-[17px]">
						<span className="w-[20px] text-[16px] leading-[14px] text-[#c0573b]">1</span>
						<div className="h-[117px] w-[202px] overflow-hidden rounded-[7px] border-[3px] border-[#b7472a] bg-white">
							<Thumbnail />
						</div>
					</div>
					<div className="flex min-w-0 flex-1 flex-col">
						<div className="h-[715px] shrink-0 pl-[20px] pt-[70px]">
							<Slide />
						</div>
						<div className="h-[44px] overflow-hidden whitespace-nowrap border-t border-[#d4d4d4] pl-[11px] pt-[3px] text-[16px] leading-[22px] text-[#5c5c5c]">
							여기에 슬라이드
						</div>
					</div>
				</div>
				<StatusBar />
			</div>
			<ShapeMenu />
			<div className="absolute left-[533px] top-[273px] z-10 flex h-[24px] w-[100px] items-center justify-center whitespace-nowrap rounded-[8px] border-2 border-[#6b6b6b] bg-white text-[13px] text-[#555] shadow-[0_8px_18px_rgba(0,0,0,0.22)]">
				연결선: 구부러짐
			</div>
			<Annotations />
		</div>
	)
}
